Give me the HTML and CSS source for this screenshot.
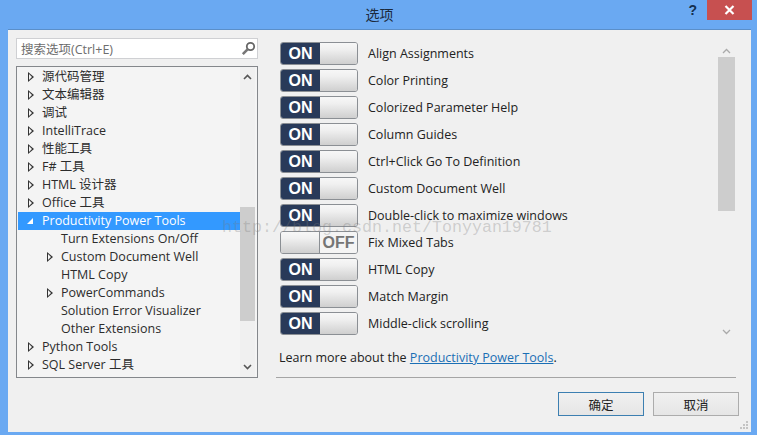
FILE: index.html
```html
<!DOCTYPE html>
<html lang="zh-CN">
<head>
    <meta charset="UTF-8">
    <meta name="viewport" content="width=device-width, initial-scale=1.0">
    <title>选项</title>
    <link rel="stylesheet" href="styles.css">
</head>
<body>
    <div class="window">
        <header class="titlebar">
            <span class="title">选项</span>
            <span class="help">?</span>
            <span class="close">
                <svg width="11" height="10" viewBox="0 0 11 10"><path d="M1.5 1l8 8M9.5 1l-8 8" stroke="#fff" stroke-width="2.2" fill="none"/></svg>
            </span>
        </header>

        <main class="client">
            <div class="panes">
                <section class="left">
                    <div class="search">
                        <span class="search-text">搜索选项(Ctrl+E)</span>
                        <svg width="15" height="15" viewBox="0 0 15 15"><circle cx="9.5" cy="5.5" r="3.7" fill="none" stroke="#666" stroke-width="1.8"/><path d="M6.8 8.2L1.8 13.2" stroke="#777" stroke-width="2.6"/></svg>
                    </div>
                    <div class="tree">
                        <ul class="tree-list">
                            <li><i class="arrow"></i>源代码管理</li>
                            <li><i class="arrow"></i>文本编辑器</li>
                            <li><i class="arrow"></i>调试</li>
                            <li><i class="arrow"></i>IntelliTrace</li>
                            <li><i class="arrow"></i>性能工具</li>
                            <li><i class="arrow"></i>F# 工具</li>
                            <li><i class="arrow"></i>HTML 设计器</li>
                            <li><i class="arrow"></i>Office 工具</li>
                            <li class="selected"><i class="arrow open"></i>Productivity Power Tools</li>
                            <li class="child"><i class="arrow none"></i>Turn Extensions On/Off</li>
                            <li class="child"><i class="arrow"></i>Custom Document Well</li>
                            <li class="child"><i class="arrow none"></i>HTML Copy</li>
                            <li class="child"><i class="arrow"></i>PowerCommands</li>
                            <li class="child"><i class="arrow none"></i>Solution Error Visualizer</li>
                            <li class="child"><i class="arrow none"></i>Other Extensions</li>
                            <li><i class="arrow"></i>Python Tools</li>
                            <li><i class="arrow"></i>SQL Server 工具</li>
                        </ul>
                        <div class="tree-scroll">
                            <svg class="chev" width="9" height="6" viewBox="0 0 9 6"><path d="M1 5l3.5-3.5L8 5" fill="none" stroke="#555" stroke-width="1.6"/></svg>
                            <div class="tree-thumb"></div>
                            <svg class="chev down" width="9" height="6" viewBox="0 0 9 6"><path d="M1 1l3.5 3.5L8 1" fill="none" stroke="#555" stroke-width="1.6"/></svg>
                        </div>
                    </div>
                </section>

                <section class="right">
                    <div class="options">
                        <ul class="option-list">
                            <li><span class="toggle"><b>ON</b><em></em></span>Align Assignments</li>
                            <li><span class="toggle"><b>ON</b><em></em></span>Color Printing</li>
                            <li><span class="toggle"><b>ON</b><em></em></span>Colorized Parameter Help</li>
                            <li><span class="toggle"><b>ON</b><em></em></span>Column Guides</li>
                            <li><span class="toggle"><b>ON</b><em></em></span>Ctrl+Click Go To Definition</li>
                            <li><span class="toggle"><b>ON</b><em></em></span>Custom Document Well</li>
                            <li><span class="toggle"><b>ON</b><em></em></span>Double-click to maximize windows</li>
                            <li><span class="toggle off"><em></em><b>OFF</b></span>Fix Mixed Tabs</li>
                            <li><span class="toggle"><b>ON</b><em></em></span>HTML Copy</li>
                            <li><span class="toggle"><b>ON</b><em></em></span>Match Margin</li>
                            <li><span class="toggle"><b>ON</b><em></em></span>Middle-click scrolling</li>
                        </ul>
                        <div class="option-scroll">
                            <svg class="chev" width="9" height="6" viewBox="0 0 9 6"><path d="M1 5l3.5-3.5L8 5" fill="none" stroke="#aaa" stroke-width="1.3"/></svg>
                            <div class="option-thumb"></div>
                            <svg class="chev down" width="9" height="6" viewBox="0 0 9 6"><path d="M1 1l3.5 3.5L8 1" fill="none" stroke="#aaa" stroke-width="1.3"/></svg>
                        </div>
                    </div>
                    <p class="learn">Learn more about the <a href="#">Productivity Power Tools</a>.</p>
                </section>
            </div>

            <footer class="buttons">
                <button class="btn default">确定</button>
                <button class="btn">取消</button>
            </footer>
            <svg class="grip" width="10" height="10" viewBox="0 0 10 10"><path d="M7 1h2v2H7zM4 4h2v2H4zM7 4h2v2H7zM1 7h2v2H1zM4 7h2v2H4zM7 7h2v2H7z" fill="#c4c4c4"/></svg>
        </main>

        <div class="watermark">http://blog.csdn.net/Tonyyan19781</div>
    </div>
</body>
</html>
```

FILE: styles.css
```css
html, body {
    margin: 0;
    padding: 0;
}

body {
    font-family: "Open Sans", "Noto Sans CJK SC", sans-serif;
    font-size: 12.5px;
    color: #222;
}

ul {
    list-style: none;
    margin: 0;
    padding: 0;
}

.window {
    position: relative;
    width: 757px;
    height: 435px;
    box-sizing: border-box;
    padding: 0 6px 3px 8px;
    background-color: #6aa9f2;
    overflow: hidden;
}

.titlebar {
    position: relative;
    height: 29px;
    padding-bottom: 2px;
    box-sizing: border-box;
    display: flex;
    justify-content: center;
    align-items: center;
    font-family: "Noto Sans CJK SC", sans-serif;
    font-size: 14px;
    color: #1c2a3c;
}

.help {
    position: absolute;
    right: 54px;
    top: 0;
    font-family: "Liberation Sans", sans-serif;
    font-weight: bold;
    font-size: 14px;
    line-height: 20px;
    color: #14304f;
}

.close {
    position: absolute;
    right: -1px;
    top: 0;
    width: 45px;
    height: 20px;
    background-color: #c75050;
    display: flex;
    justify-content: center;
    align-items: center;
}

.client {
    position: relative;
    height: 403px;
    box-sizing: border-box;
    border-top: 1px solid #5b8fc9;
    background-color: #f0f0f0;
}

.grip {
    position: absolute;
    right: 2px;
    bottom: 2px;
}

.panes {
    display: flex;
    height: 339px;
    padding: 8px 0 0 8px;
}

.left {
    width: 242px;
}

.search {
    height: 21px;
    box-sizing: border-box;
    border: 1px solid #cfd0d3;
    background-color: #fff;
    display: flex;
    align-items: center;
    justify-content: space-between;
    padding: 0 1px 0 4px;
}

.search-text {
    color: #6d6d6d;
    font-size: 12.5px;
}

.tree {
    display: flex;
    height: 312px;
    box-sizing: border-box;
    margin-top: 7px;
    border: 1px solid #84878b;
    background-color: #f4f4f4;
}

.tree-list {
    flex: 1;
    padding: 1px 0 0 1px;
}

.tree-list li {
    height: 18px;
    line-height: 18px;
    display: flex;
    align-items: center;
    white-space: nowrap;
    color: #2c2c2c;
}

.tree-list .selected {
    background-color: #3399ff;
    color: #fff;
}

.tree-list .child {
    padding-left: 19px;
}

.arrow {
    width: 0;
    height: 0;
    margin: 0 8px 0 10px;
    border-left: 6px solid #333;
    border-top: 5px solid transparent;
    border-bottom: 5px solid transparent;
    position: relative;
    flex: none;
}

.arrow::after {
    content: "";
    position: absolute;
    left: -5px;
    top: -3px;
    border-left: 3px solid #f4f4f4;
    border-top: 3px solid transparent;
    border-bottom: 3px solid transparent;
}

.arrow.open {
    border: 0;
    width: 0;
    height: 0;
    margin: 0 9px 0 9px;
    border-right: 6px solid #fff;
    border-top: 6px solid transparent;
}

.arrow.open::after {
    display: none;
}

.arrow.none {
    visibility: hidden;
}

.tree-scroll {
    width: 15px;
    margin-right: 2px;
    background-color: #f0f0f0;
    display: flex;
    flex-direction: column;
    align-items: center;
    position: relative;
}

.chev {
    display: block;
    margin-top: 7px;
}

.tree-thumb {
    align-self: stretch;
    height: 114px;
    margin-top: 127px;
    background-color: #cdcdcd;
}

.tree-scroll .down {
    margin-top: 43px;
}

.right {
    width: 460px;
    margin-left: 18px;
}

.options {
    display: flex;
    height: 300px;
}

.option-list {
    flex: 1;
    padding-top: 2px;
}

.option-list li {
    height: 27px;
    display: flex;
    align-items: center;
    color: #222;
    padding-left: 4px;
}

.toggle {
    width: 78px;
    height: 23px;
    box-sizing: border-box;
    margin-right: 10px;
    display: flex;
    border: 1px solid #8b8f94;
    border-radius: 3px;
    overflow: hidden;
}

.toggle b {
    width: 39px;
    background-color: #293a59;
    color: #fff;
    font-family: "Liberation Sans", sans-serif;
    font-size: 16px;
    line-height: 21px;
    text-align: center;
}

.toggle em {
    flex: 1;
    background: linear-gradient(#f7f7f7, #f0f0f0 30%, #cfcfcf);
}

.toggle.off b {
    width: 37px;
    background-color: #f4f4f4;
    color: #757575;
    border-left: 1px solid #8b8f94;
}

.option-scroll {
    width: 17px;
    margin-right: 1px;
    display: flex;
    flex-direction: column;
    align-items: center;
}

.option-scroll .chev {
    margin-top: 10px;
}

.option-thumb {
    align-self: stretch;
    height: 154px;
    margin-top: 3px;
    background-color: #cdcdcd;
}

.option-scroll .down {
    margin-top: 118px;
}

.learn {
    margin: 0;
    padding: 11px 0 0 3px;
    height: 32px;
    box-sizing: border-box;
    line-height: 18px;
    color: #222;
}

.learn a {
    color: #1b6fb5;
}

.buttons {
    display: flex;
    justify-content: flex-end;
    gap: 9px;
    margin: 0 12px 0 0;
    padding-top: 15px;
    position: relative;
}

.buttons::before {
    content: "";
    position: absolute;
    left: 268px;
    right: 3px;
    top: 0;
    border-top: 1px solid #a5a5a5;
}

.btn {
    width: 86px;
    height: 24px;
    padding: 0;
    font-family: "Noto Sans CJK SC", sans-serif;
    font-size: 12.5px;
    color: #222;
    border: 1px solid #acacac;
    background: linear-gradient(#f0f0f0, #e5e5e5);
}

.btn.default {
    border-color: #3c7fb1;
}

.watermark {
    position: absolute;
    left: 222px;
    top: 218px;
    font-family: "Liberation Mono", monospace;
    font-size: 16.67px;
    line-height: 20px;
    color: rgba(120, 120, 120, 0.3);
    white-space: nowrap;
}
```
